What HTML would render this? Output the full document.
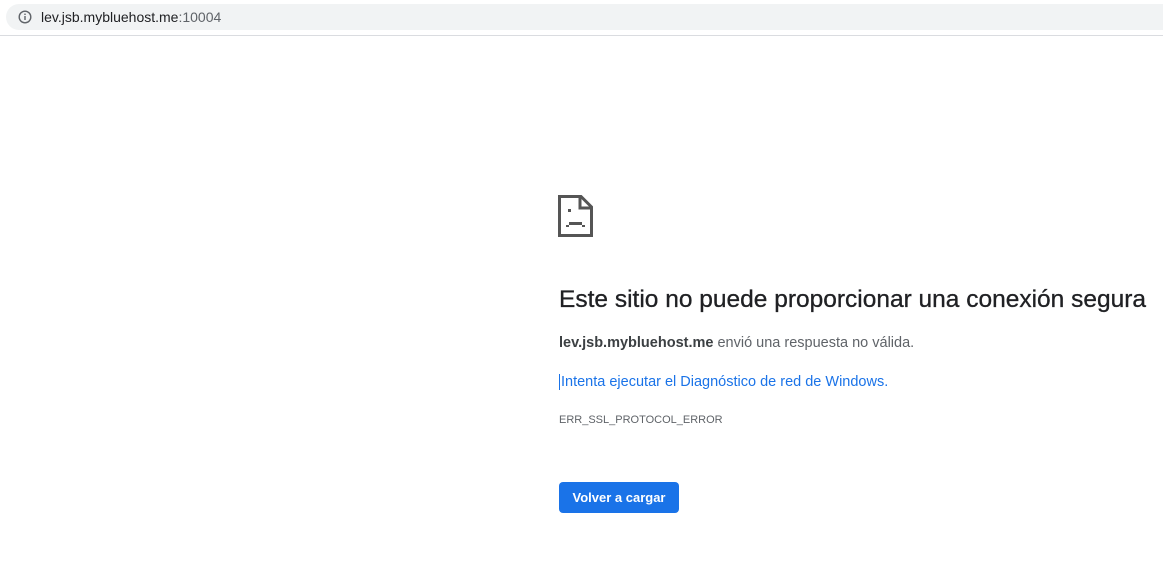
<!DOCTYPE html>
<html><head><meta charset="utf-8"><style>
body{margin:0;width:1163px;height:569px;background:#fff;font-family:"Liberation Sans",Arial,sans-serif;position:relative;overflow:hidden}
.bar{position:absolute;left:6px;top:4px;width:1170px;height:26px;border-radius:13px;background:#f1f3f4}
.url{position:absolute;left:41px;top:9px;font-size:14px;color:#202124}
.url span{color:#5f6368}
.line{position:absolute;left:0;top:35px;width:1163px;height:1px;background:#dadce0}
.t{position:absolute;left:559px;white-space:nowrap}
h1{margin:0;font-size:24.5px;font-weight:normal;color:#202124;top:286px;-webkit-text-stroke:0.3px #202124}
.p{font-size:14.5px;color:#5f6368}
.btn{position:absolute;left:559px;top:482px;width:120px;height:31px;background:#1a73e8;border-radius:4px;color:#fff;font-size:13px;font-weight:bold;text-align:center;line-height:31px}
</style></head><body>
<div class="bar"></div>
<svg style="position:absolute;left:18px;top:10px" width="14" height="14" viewBox="0 0 14 14"><circle cx="7" cy="7" r="5.8" fill="none" stroke="#5f6368" stroke-width="1.4"/><rect x="6.3" y="6" width="1.4" height="4" fill="#5f6368"/><rect x="6.3" y="3.6" width="1.4" height="1.4" fill="#5f6368"/></svg>
<div class="url">lev.jsb.mybluehost.me<span>:10004</span></div>
<div class="line"></div>
<svg style="position:absolute;left:558px;top:195px" width="35" height="42" viewBox="0 0 35 42"><path d="M1.5 1.5H23L33.5 12V40.5H1.5Z" fill="none" stroke="#555" stroke-width="3"/><path d="M22 1.5V13H33.5" fill="none" stroke="#555" stroke-width="3"/><rect x="10" y="14" width="3" height="3" fill="#555"/><rect x="11" y="27" width="13" height="3" fill="#555"/><rect x="8" y="30" width="3" height="2" fill="#555"/><rect x="24" y="30" width="3" height="2" fill="#555"/></svg>
<h1 class="t">Este sitio no puede proporcionar una conexión segura</h1>
<div class="t p" style="top:335px"><b style="color:#3c4043">lev.jsb.mybluehost.me</b> envió una respuesta no válida.</div>
<div class="t p" style="top:374px;color:#1a73e8"><span style="border-left:1px solid #1a73e8;margin-right:1px"></span>Intenta ejecutar el Diagnóstico de red de Windows.</div>
<div class="t" style="top:414px;font-size:11px;color:#5f6368">ERR_SSL_PROTOCOL_ERROR</div>
<div class="btn">Volver a cargar</div>
</body></html>
